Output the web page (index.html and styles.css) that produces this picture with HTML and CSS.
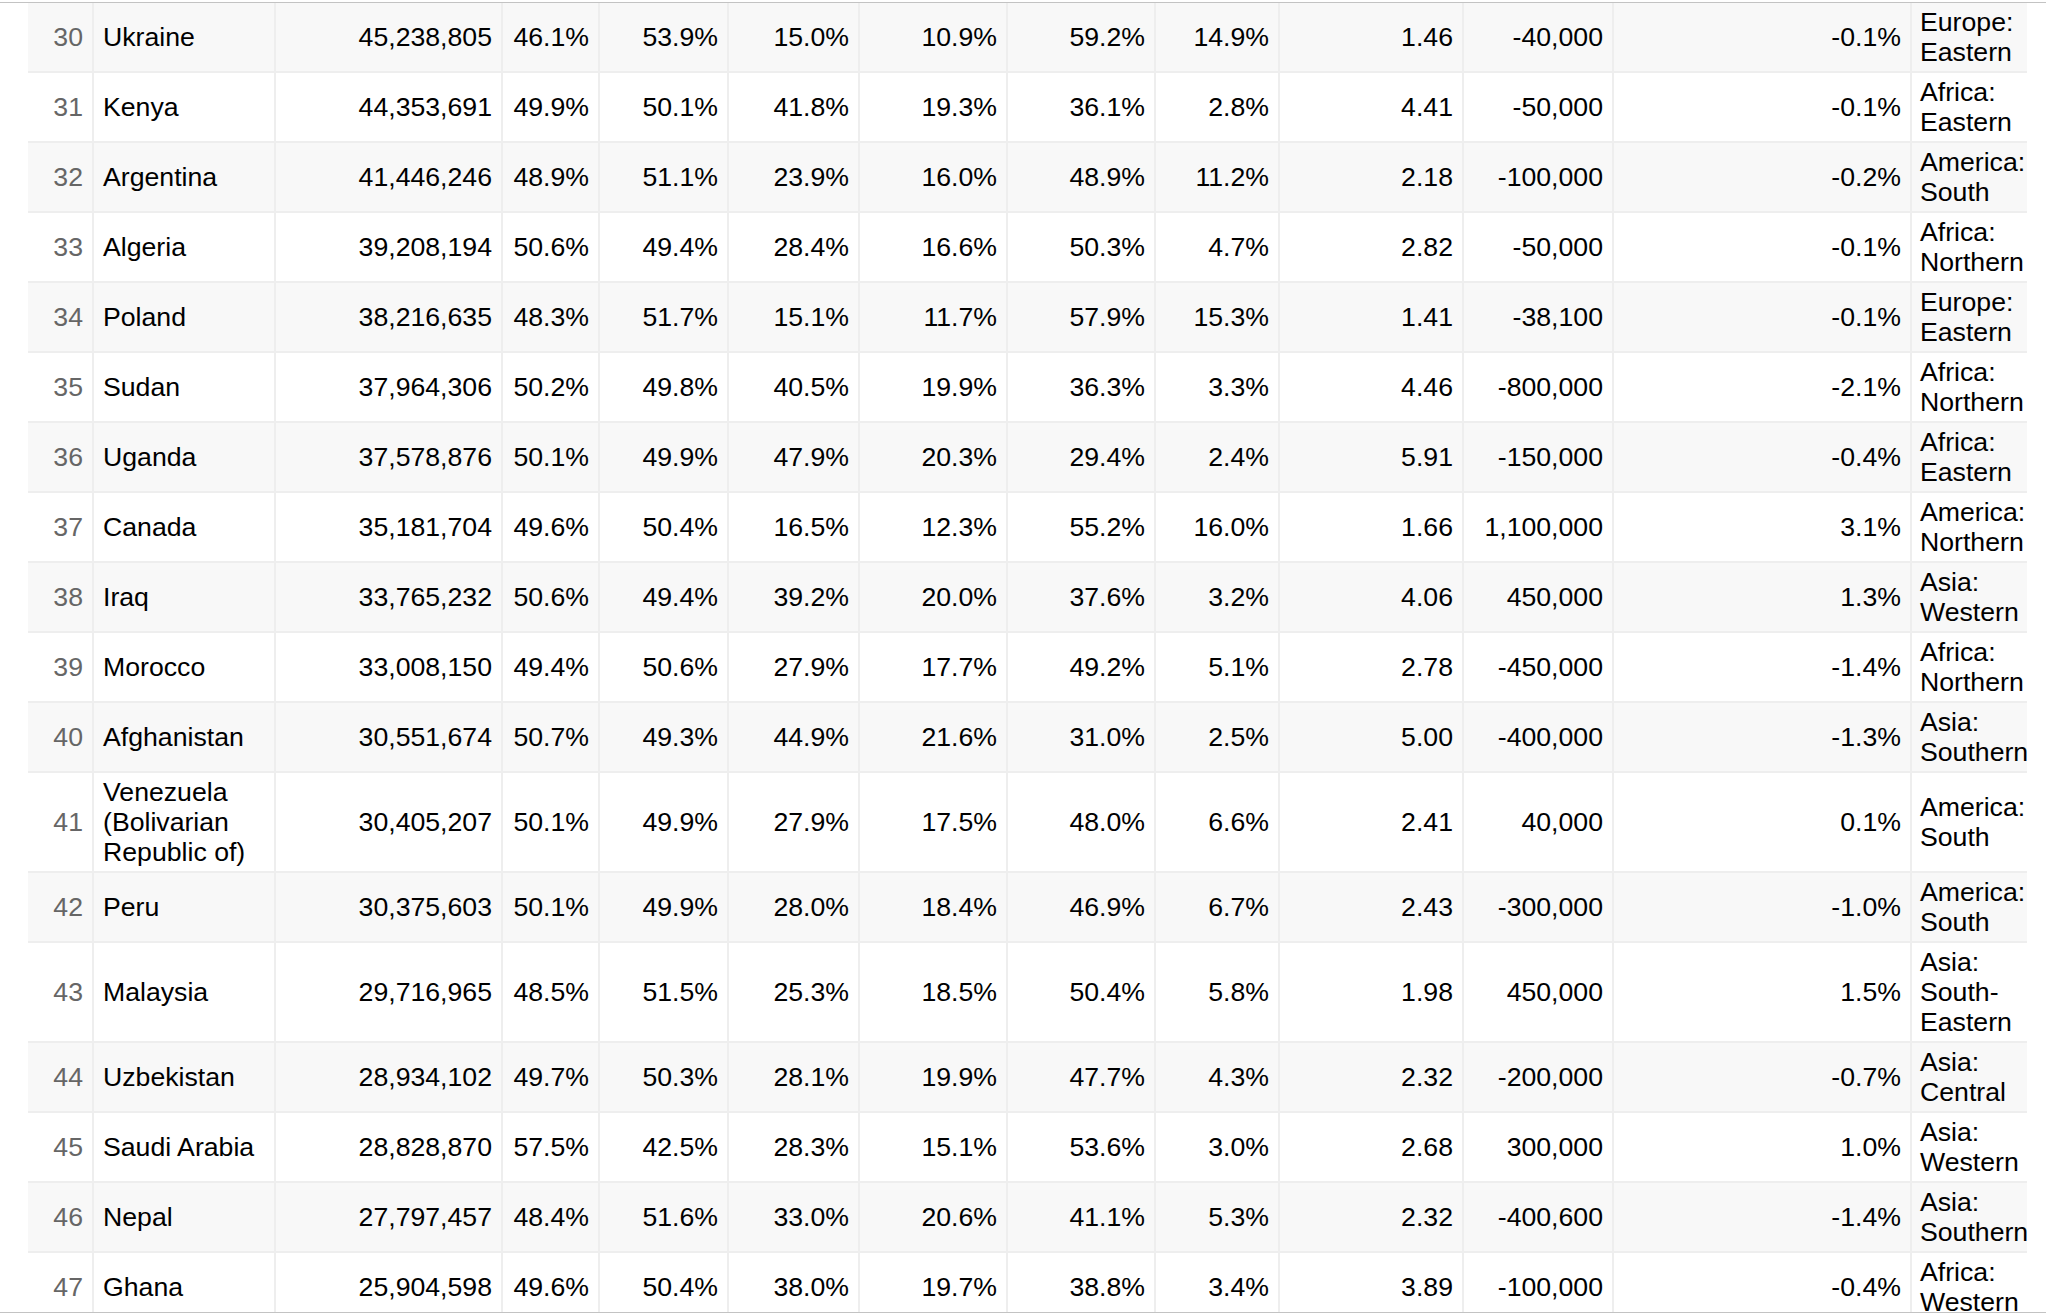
FILE: index.html
```html
<!DOCTYPE html>
<html lang="en">
<head>
<meta charset="utf-8">
<title>Population table</title>
<link rel="stylesheet" href="styles.css">
</head>
<body>
<div class="viewport">
  <div class="table" id="tbl">
    <div class="row shade"><div class="cell seq">30</div><div class="cell text">Ukraine</div><div class="cell">45,238,805</div><div class="cell">46.1%</div><div class="cell">53.9%</div><div class="cell">15.0%</div><div class="cell">10.9%</div><div class="cell">59.2%</div><div class="cell">14.9%</div><div class="cell">1.46</div><div class="cell">-40,000</div><div class="cell">-0.1%</div><div class="cell text region">Europe: Eastern</div></div>
    <div class="row"><div class="cell seq">31</div><div class="cell text">Kenya</div><div class="cell">44,353,691</div><div class="cell">49.9%</div><div class="cell">50.1%</div><div class="cell">41.8%</div><div class="cell">19.3%</div><div class="cell">36.1%</div><div class="cell">2.8%</div><div class="cell">4.41</div><div class="cell">-50,000</div><div class="cell">-0.1%</div><div class="cell text region">Africa: Eastern</div></div>
    <div class="row shade"><div class="cell seq">32</div><div class="cell text">Argentina</div><div class="cell">41,446,246</div><div class="cell">48.9%</div><div class="cell">51.1%</div><div class="cell">23.9%</div><div class="cell">16.0%</div><div class="cell">48.9%</div><div class="cell">11.2%</div><div class="cell">2.18</div><div class="cell">-100,000</div><div class="cell">-0.2%</div><div class="cell text region">America: South</div></div>
    <div class="row"><div class="cell seq">33</div><div class="cell text">Algeria</div><div class="cell">39,208,194</div><div class="cell">50.6%</div><div class="cell">49.4%</div><div class="cell">28.4%</div><div class="cell">16.6%</div><div class="cell">50.3%</div><div class="cell">4.7%</div><div class="cell">2.82</div><div class="cell">-50,000</div><div class="cell">-0.1%</div><div class="cell text region">Africa: Northern</div></div>
    <div class="row shade"><div class="cell seq">34</div><div class="cell text">Poland</div><div class="cell">38,216,635</div><div class="cell">48.3%</div><div class="cell">51.7%</div><div class="cell">15.1%</div><div class="cell">11.7%</div><div class="cell">57.9%</div><div class="cell">15.3%</div><div class="cell">1.41</div><div class="cell">-38,100</div><div class="cell">-0.1%</div><div class="cell text region">Europe: Eastern</div></div>
    <div class="row"><div class="cell seq">35</div><div class="cell text">Sudan</div><div class="cell">37,964,306</div><div class="cell">50.2%</div><div class="cell">49.8%</div><div class="cell">40.5%</div><div class="cell">19.9%</div><div class="cell">36.3%</div><div class="cell">3.3%</div><div class="cell">4.46</div><div class="cell">-800,000</div><div class="cell">-2.1%</div><div class="cell text region">Africa: Northern</div></div>
    <div class="row shade"><div class="cell seq">36</div><div class="cell text">Uganda</div><div class="cell">37,578,876</div><div class="cell">50.1%</div><div class="cell">49.9%</div><div class="cell">47.9%</div><div class="cell">20.3%</div><div class="cell">29.4%</div><div class="cell">2.4%</div><div class="cell">5.91</div><div class="cell">-150,000</div><div class="cell">-0.4%</div><div class="cell text region">Africa: Eastern</div></div>
    <div class="row"><div class="cell seq">37</div><div class="cell text">Canada</div><div class="cell">35,181,704</div><div class="cell">49.6%</div><div class="cell">50.4%</div><div class="cell">16.5%</div><div class="cell">12.3%</div><div class="cell">55.2%</div><div class="cell">16.0%</div><div class="cell">1.66</div><div class="cell">1,100,000</div><div class="cell">3.1%</div><div class="cell text region">America: Northern</div></div>
    <div class="row shade"><div class="cell seq">38</div><div class="cell text">Iraq</div><div class="cell">33,765,232</div><div class="cell">50.6%</div><div class="cell">49.4%</div><div class="cell">39.2%</div><div class="cell">20.0%</div><div class="cell">37.6%</div><div class="cell">3.2%</div><div class="cell">4.06</div><div class="cell">450,000</div><div class="cell">1.3%</div><div class="cell text region">Asia: Western</div></div>
    <div class="row"><div class="cell seq">39</div><div class="cell text">Morocco</div><div class="cell">33,008,150</div><div class="cell">49.4%</div><div class="cell">50.6%</div><div class="cell">27.9%</div><div class="cell">17.7%</div><div class="cell">49.2%</div><div class="cell">5.1%</div><div class="cell">2.78</div><div class="cell">-450,000</div><div class="cell">-1.4%</div><div class="cell text region">Africa: Northern</div></div>
    <div class="row shade"><div class="cell seq">40</div><div class="cell text">Afghanistan</div><div class="cell">30,551,674</div><div class="cell">50.7%</div><div class="cell">49.3%</div><div class="cell">44.9%</div><div class="cell">21.6%</div><div class="cell">31.0%</div><div class="cell">2.5%</div><div class="cell">5.00</div><div class="cell">-400,000</div><div class="cell">-1.3%</div><div class="cell text region">Asia: Southern</div></div>
    <div class="row"><div class="cell seq">41</div><div class="cell text">Venezuela (Bolivarian Republic of)</div><div class="cell">30,405,207</div><div class="cell">50.1%</div><div class="cell">49.9%</div><div class="cell">27.9%</div><div class="cell">17.5%</div><div class="cell">48.0%</div><div class="cell">6.6%</div><div class="cell">2.41</div><div class="cell">40,000</div><div class="cell">0.1%</div><div class="cell text region">America: South</div></div>
    <div class="row shade"><div class="cell seq">42</div><div class="cell text">Peru</div><div class="cell">30,375,603</div><div class="cell">50.1%</div><div class="cell">49.9%</div><div class="cell">28.0%</div><div class="cell">18.4%</div><div class="cell">46.9%</div><div class="cell">6.7%</div><div class="cell">2.43</div><div class="cell">-300,000</div><div class="cell">-1.0%</div><div class="cell text region">America: South</div></div>
    <div class="row"><div class="cell seq">43</div><div class="cell text">Malaysia</div><div class="cell">29,716,965</div><div class="cell">48.5%</div><div class="cell">51.5%</div><div class="cell">25.3%</div><div class="cell">18.5%</div><div class="cell">50.4%</div><div class="cell">5.8%</div><div class="cell">1.98</div><div class="cell">450,000</div><div class="cell">1.5%</div><div class="cell text region">Asia: South-Eastern</div></div>
    <div class="row shade"><div class="cell seq">44</div><div class="cell text">Uzbekistan</div><div class="cell">28,934,102</div><div class="cell">49.7%</div><div class="cell">50.3%</div><div class="cell">28.1%</div><div class="cell">19.9%</div><div class="cell">47.7%</div><div class="cell">4.3%</div><div class="cell">2.32</div><div class="cell">-200,000</div><div class="cell">-0.7%</div><div class="cell text region">Asia: Central</div></div>
    <div class="row"><div class="cell seq">45</div><div class="cell text">Saudi Arabia</div><div class="cell">28,828,870</div><div class="cell">57.5%</div><div class="cell">42.5%</div><div class="cell">28.3%</div><div class="cell">15.1%</div><div class="cell">53.6%</div><div class="cell">3.0%</div><div class="cell">2.68</div><div class="cell">300,000</div><div class="cell">1.0%</div><div class="cell text region">Asia: Western</div></div>
    <div class="row shade"><div class="cell seq">46</div><div class="cell text">Nepal</div><div class="cell">27,797,457</div><div class="cell">48.4%</div><div class="cell">51.6%</div><div class="cell">33.0%</div><div class="cell">20.6%</div><div class="cell">41.1%</div><div class="cell">5.3%</div><div class="cell">2.32</div><div class="cell">-400,600</div><div class="cell">-1.4%</div><div class="cell text region">Asia: Southern</div></div>
    <div class="row"><div class="cell seq">47</div><div class="cell text">Ghana</div><div class="cell">25,904,598</div><div class="cell">49.6%</div><div class="cell">50.4%</div><div class="cell">38.0%</div><div class="cell">19.7%</div><div class="cell">38.8%</div><div class="cell">3.4%</div><div class="cell">3.89</div><div class="cell">-100,000</div><div class="cell">-0.4%</div><div class="cell text region">Africa: Western</div></div>
  </div>
</div>
</body>
</html>
```

FILE: styles.css
```css
html, body {
  margin: 0;
  padding: 0;
  background: #ffffff;
}

body {
  font-family: "Liberation Sans", Arial, Helvetica, sans-serif;
}

.viewport {
  margin-top: 2px;
  height: 1309px;
  border-top: 1px solid #c3c3c3;
  border-bottom: 1px solid #c3c3c3;
  overflow: hidden;
}

.table {
  margin-left: 28px;
  width: 1999px;
  font-size: 26.67px;
  line-height: 30px;
  color: #000000;
}

.row {
  display: grid;
  grid-template-columns: 66px 182px 227px 97px 129px 131px 148px 148px 124px 184px 150px 298px 115px;
  background: #ffffff;
}

.row.shade {
  background: #f8f8f8;
}

.cell {
  box-sizing: border-box;
  min-width: 0;
  border-right: 2px solid #eeeeee;
  border-bottom: 2px solid #eeeeee;
  padding: 4px 9px 4px 3px;
  display: flex;
  align-items: center;
  justify-content: flex-end;
  text-align: right;
  white-space: normal;
}

.cell:last-child {
  border-right: 0;
}

.cell.text {
  justify-content: flex-start;
  text-align: left;
  padding-left: 9px;
  padding-right: 3px;
}

.cell.region {
  padding-left: 8px;
  padding-right: 0;
}

.cell.seq {
  color: #666666;
}
```
